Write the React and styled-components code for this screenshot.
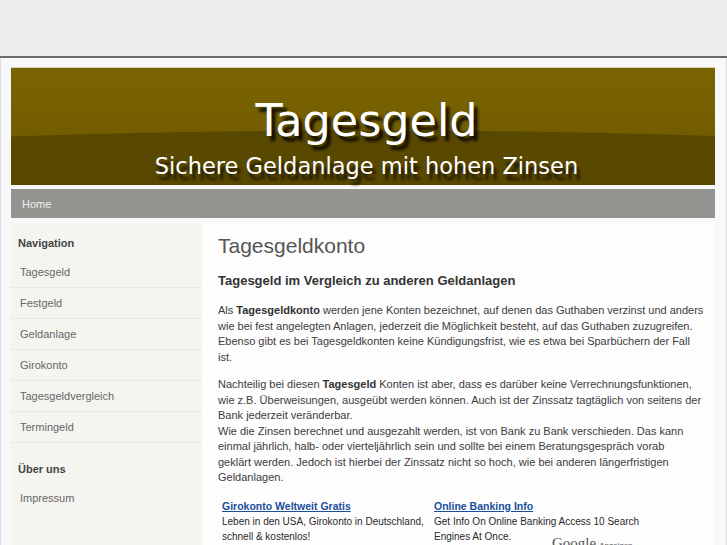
import React from "react";
import styled, { createGlobalStyle } from "styled-components";

const GlobalStyle = createGlobalStyle`
  html, body {
    margin: 0;
    padding: 0;
    background: #f8f8fa;
  }
  body {
    font-family: "Liberation Sans", Arial, sans-serif;
  }
`;

const TopBar = styled.div`
  height: 56px;
  background: #eeeeee;
  border-bottom: 2px solid #6a6a68;
`;

const Page = styled.div`
  background: #f8f8fa;
  border-left: 1px solid #dcdcdc;
  border-right: 1px solid #dcdcdc;
  padding: 9px 11px 0 10px;
  min-height: 500px;
`;

const Banner = styled.div`
  height: 117px;
  padding-left: 7px;
  border-top: 1px solid #d6d0b4;
  background:
    radial-gradient(1800px 300px at 360px 362px, #594800 99.7%, transparent 100%),
    linear-gradient(#7b6400, #6c5700);
  display: flex;
  flex-direction: column;
  align-items: center;
  font-family: "DejaVu Sans", Verdana, sans-serif;
  color: #ffffff;
`;

const BannerTitle = styled.div`
  margin-top: 28px;
  font-size: 44.5px;
  line-height: 50px;
  text-shadow: 4px 5px 3px rgba(0, 0, 0, 0.85);
`;

const BannerSub = styled.div`
  margin-top: 7px;
  font-size: 22.5px;
  line-height: 26px;
  text-shadow: 3px 6px 3px rgba(0, 0, 0, 0.75);
`;

const NavBar = styled.div`
  margin-top: 4px;
  height: 29px;
  background: #939390;
  display: flex;
  align-items: center;
  padding-left: 11px;
`;

const NavLink = styled.a`
  color: #f0f0ee;
  font-size: 11px;
  text-decoration: none;
`;

const Main = styled.div`
  margin-top: 5px;
  display: flex;
  min-height: 330px;
`;

const Sidebar = styled.div`
  width: 191px;
  flex-shrink: 0;
  background: #f5f5f0;
`;

const SideHeading = styled.div`
  padding: ${(p) => (p.$first ? "13px" : "19px")} 7px 7px;
  font-size: 11px;
  line-height: 14px;
  font-weight: bold;
  color: #444;
`;

const SideItem = styled.div`
  height: 30px;
  line-height: 30px;
  padding-left: 9px;
  font-size: 11px;
  color: #666;
  border-bottom: ${(p) => (p.$last ? "1px solid transparent" : "1px solid #e9e9e2")};
`;

const Content = styled.div`
  flex: 1;
  background: #fdfdfd;
  padding: 11px 10px 0 16px;
  color: #3c3c3c;
`;

const Title = styled.h1`
  margin: 0;
  font-size: 21px;
  line-height: 24px;
  font-weight: normal;
  color: #555;
`;

const SubTitle = styled.h2`
  margin: 15px 0 0;
  font-size: 13px;
  line-height: 16px;
  font-weight: bold;
  color: #333;
`;

const Para = styled.p`
  margin: ${(p) => (p.$first ? "14px" : "12px")} 0 0;
  font-size: 11px;
  line-height: 15.5px;

  b {
    color: #333;
  }
`;

const Ads = styled.div`
  margin-top: 13px;
  padding-left: 4px;
  display: grid;
  grid-template-columns: 212px 212px;
  position: relative;
`;

const Ad = styled.div`
  font-size: 10px;
  line-height: 15px;
  color: #2a2a2a;
`;

const AdLink = styled.a`
  display: block;
  color: #1a4f9e;
  font-size: 10.5px;
  font-weight: bold;
  text-decoration: underline;
`;

const GoogleMark = styled.div`
  position: absolute;
  left: 334px;
  top: 36px;
  display: flex;
  align-items: baseline;
  gap: 3px;
  color: #555;
`;

const GoogleWord = styled.span`
  font-family: "Liberation Serif", serif;
  font-size: 15px;
`;

const GoogleSmall = styled.span`
  font-size: 8px;
`;

const navItems = [
  "Tagesgeld",
  "Festgeld",
  "Geldanlage",
  "Girokonto",
  "Tagesgeldvergleich",
  "Termingeld",
];

const App = () => {
  return (
    <>
      <GlobalStyle />
      <TopBar />
      <Page>
        <Banner>
          <BannerTitle>Tagesgeld</BannerTitle>
          <BannerSub>Sichere Geldanlage mit hohen Zinsen</BannerSub>
        </Banner>
        <NavBar>
          <NavLink href="#">Home</NavLink>
        </NavBar>
        <Main>
          <Sidebar>
            <SideHeading $first>Navigation</SideHeading>
            {navItems.map((n) => (
              <SideItem key={n}>{n}</SideItem>
            ))}
            <SideHeading>Über uns</SideHeading>
            <SideItem $last>Impressum</SideItem>
          </Sidebar>
          <Content>
            <Title>Tagesgeldkonto</Title>
            <SubTitle>Tagesgeld im Vergleich zu anderen Geldanlagen</SubTitle>
            <Para $first>
              Als <b>Tagesgeldkonto</b> werden jene Konten bezeichnet, auf denen das Guthaben
              verzinst und anders wie bei fest angelegten Anlagen, jederzeit die Möglichkeit
              besteht, auf das Guthaben zuzugreifen. Ebenso gibt es bei Tagesgeldkonten keine
              Kündigungsfrist, wie es etwa bei Sparbüchern der Fall ist.
            </Para>
            <Para>
              Nachteilig bei diesen <b>Tagesgeld</b> Konten ist aber, dass es darüber keine
              Verrechnungsfunktionen, wie z.B. Überweisungen, ausgeübt werden können. Auch ist
              der Zinssatz tagtäglich von seitens der Bank jederzeit veränderbar.
              <br />
              Wie die Zinsen berechnet und ausgezahlt werden, ist von Bank zu Bank verschieden.
              Das kann einmal jährlich, halb- oder vierteljährlich sein und sollte bei einem
              Beratungsgespräch vorab
              <br />
              geklärt werden. Jedoch ist hierbei der Zinssatz nicht so hoch, wie bei anderen
              längerfristigen Geldanlagen.
            </Para>
            <Ads>
              <Ad>
                <AdLink href="#">Girokonto Weltweit Gratis</AdLink>
                Leben in den USA, Girokonto in Deutschland, schnell &amp; kostenlos!
              </Ad>
              <Ad>
                <AdLink href="#">Online Banking Info</AdLink>
                Get Info On Online Banking Access 10 Search Engines At Once.
              </Ad>
              <GoogleMark>
                <GoogleWord>Google</GoogleWord>
                <GoogleSmall>Anzeigen</GoogleSmall>
              </GoogleMark>
            </Ads>
          </Content>
        </Main>
      </Page>
    </>
  );
};

export default App;
